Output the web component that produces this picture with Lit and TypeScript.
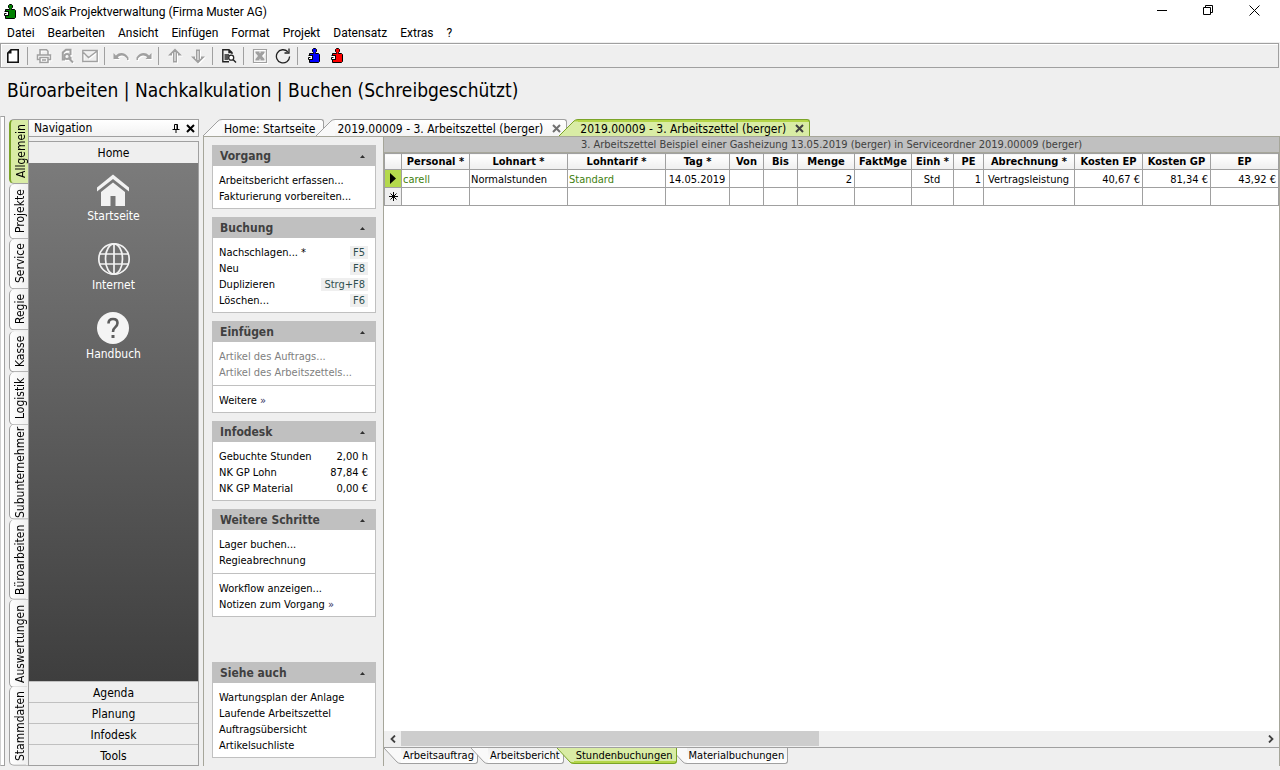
import { LitElement, html, svg, css, nothing } from "lit";
import { customElement, property, state } from "lit/decorators.js";
import { classMap } from "lit/directives/class-map.js";
import { styleMap } from "lit/directives/style-map.js";

interface Tool {
  icon?: string;
  label?: string;
  off?: boolean;
}

interface TaskRow {
  text: string;
  key?: string;
  value?: string;
  off?: boolean;
  more?: boolean;
}

interface TaskBox {
  title: string;
  sections: TaskRow[][];
}

interface Column {
  title: string;
  width: number;
  align: "left" | "center" | "right";
  value: string;
  link?: boolean;
}

const puzzle = (color: string) => svg`
  <path d="M3.5 14.5V11.500H6.500V7.500H3.500V5.500H7.500V4.500L6.500 3.500V1.500L7.500 .5H9.500L10.500 1.500V3.500L9.500 4.500V5.500H12.500L13.500 6.500V13.500L12.500 14.500Z"
    fill=${color} stroke="#000" />
  <path d="M3 8H6V11H3Z" fill="#fff" />
  <path d="M4.500 9.500H2.500V11.500H6.500V7.500H2.500" fill="none" stroke="#000" />`;

const GRAY = "#a0a0a0";

const ICONS: Record<string, unknown> = {
  new: svg`<path d="M6 1.800H13.200V14.200H2.800V5Z" fill="#fff" stroke="#111" stroke-width="1.600" /><path d="M6.500 1.500V5.500H2.500Z" fill="#111" />`,
  print: svg`<path d="M4 7V1.800H10.500L12 3.300V7 M4 11.500H1.500V7H14.500V11.500H12 M4 9.500H12V14.500H4Z M6 12H10" fill="none" stroke=${GRAY} stroke-width="1.500" />`,
  preview: svg`<path d="M11.500 7V1.800H7L3.800 4.500V11.500H6 M11.500 9V12.500 M10 10.500L14 14.500" fill="none" stroke=${GRAY} stroke-width="2" /><circle cx="8" cy="8.500" r="2.600" fill="none" stroke=${GRAY} stroke-width="2" />`,
  mail: svg`<path d="M.8 2.500H15.200V13.500H.8Z M1.500 4.500L6.500 9.500L8 8.500L14.500 3.500" fill="none" stroke=${GRAY} stroke-width="1.400" />`,
  undo: svg`<path d="M.5 5V11H6.500L4.800 9.300C7 6.800 11 6.300 14 10.500V12H15.500V9.500C12 4 6.500 3.800 2.900 7.400Z" fill=${GRAY} />`,
  redo: svg`<path d="M15.500 5V11H9.500L11.200 9.300C9 6.800 5 6.300 2 10.500V12H.5V9.500C4 4 9.500 3.800 13.100 7.400Z" fill=${GRAY} />`,
  up: svg`<path d="M8 .5L15 7.500H11V5.500L10 5V14.500H6V5L5 5.500V7.500H1Z" fill=${GRAY} /><path d="M8 4V13" stroke="#efefef" stroke-width="1.200" />`,
  down: svg`<path d="M8 15.500L15 8.500H11V10.500L10 11V1.500H6V11L5 10.500V8.500H1Z" fill=${GRAY} /><path d="M8 3V12" stroke="#efefef" stroke-width="1.200" />`,
  find: svg`<path d="M8 13.800H1.800V1.800H8L11 4.500V6 M8 1.800V4.500H11 M3.500 7H8 M3.500 9H7 M3.500 11H7 M12 11.500L15 14.500" fill="none" stroke="#222" stroke-width="1.400" /><circle cx="10.200" cy="9.700" r="2.500" fill="#fff" stroke="#222" stroke-width="1.300" />`,
  excel: svg`<path d="M1.500 1.500H14.500V14.500H1.500Z" fill="none" stroke=${GRAY} stroke-width="1.200" /><path d="M3.500 3.500H12.500V5L10 8L12.500 11V12.500H3.500V11L6 8L3.500 5Z" fill=${GRAY} /><path d="M7 3.500H9L8 5.500Z M7 12.500H9L8 10.500Z" fill="#efefef" />`,
  refresh: svg`<path d="M12.800 3.800A6.600 6.600 0 1 0 14.600 8.500" fill="none" stroke="#222" stroke-width="1.300" /><path d="M14 .5V5H9.500" fill="none" stroke="#222" stroke-width="1.300" />`,
  green: puzzle("#008000"),
  blue: puzzle("#0000ff"),
  red: puzzle("#ff0000"),
};

const icon = (name: string) =>
  html`<svg class="icon" viewBox="0 0 16 16" width="16" height="16" aria-hidden="true">${ICONS[name]}</svg>`;

const cross = (color: string) => html`
  <svg viewBox="0 0 9 9" width="9" height="9" aria-hidden="true">
    <path d="M1 1L8 8M8 1L1 8" stroke=${color} stroke-width="2" fill="none" />
  </svg>`;

const MENUS = ["Datei", "Bearbeiten", "Ansicht", "Einfügen", "Format", "Projekt", "Datensatz", "Extras", "?"];

const TOOLS: Tool[] = [
  { icon: "new", label: "Neu" },
  {},
  { icon: "print", label: "Drucken", off: true },
  { icon: "preview", label: "Seitenansicht", off: true },
  { icon: "mail", label: "E-Mail", off: true },
  {},
  { icon: "undo", label: "Rückgängig", off: true },
  { icon: "redo", label: "Wiederholen", off: true },
  {},
  { icon: "up", label: "Nach oben", off: true },
  { icon: "down", label: "Nach unten", off: true },
  {},
  { icon: "find", label: "Suchen" },
  {},
  { icon: "excel", label: "Excel", off: true },
  { icon: "refresh", label: "Aktualisieren" },
  {},
  { icon: "blue", label: "Modul blau" },
  { icon: "red", label: "Modul rot" },
];

const AREAS: [string, number][] = [
  ["Allgemein", 64],
  ["Projekte", 55],
  ["Service", 50],
  ["Regie", 41],
  ["Kasse", 41],
  ["Logistik", 53],
  ["Subunternehmer", 95],
  ["Büroarbeiten", 80],
  ["Auswertungen", 88],
  ["Stammdaten", 79],
];

const BOXES: TaskBox[] = [
  { title: "Vorgang", sections: [[{ text: "Arbeitsbericht erfassen..." }, { text: "Fakturierung vorbereiten..." }]] },
  {
    title: "Buchung",
    sections: [[
      { text: "Nachschlagen... *", key: "F5" },
      { text: "Neu", key: "F8" },
      { text: "Duplizieren", key: "Strg+F8" },
      { text: "Löschen...", key: "F6" },
    ]],
  },
  {
    title: "Einfügen",
    sections: [
      [{ text: "Artikel des Auftrags...", off: true }, { text: "Artikel des Arbeitszettels...", off: true }],
      [{ text: "Weitere", more: true }],
    ],
  },
  {
    title: "Infodesk",
    sections: [[
      { text: "Gebuchte Stunden", value: "2,00 h" },
      { text: "NK GP Lohn", value: "87,84 €" },
      { text: "NK GP Material", value: "0,00 €" },
    ]],
  },
  {
    title: "Weitere Schritte",
    sections: [
      [{ text: "Lager buchen..." }, { text: "Regieabrechnung" }],
      [{ text: "Workflow anzeigen..." }, { text: "Notizen zum Vorgang", more: true }],
    ],
  },
  {
    title: "Siehe auch",
    sections: [[
      { text: "Wartungsplan der Anlage" },
      { text: "Laufende Arbeitszettel" },
      { text: "Auftragsübersicht" },
      { text: "Artikelsuchliste" },
    ]],
  },
];

const COLUMNS: Column[] = [
  { title: "Personal *", width: 68, align: "left", value: "carell", link: true },
  { title: "Lohnart *", width: 98, align: "left", value: "Normalstunden" },
  { title: "Lohntarif *", width: 98, align: "left", value: "Standard", link: true },
  { title: "Tag *", width: 64, align: "center", value: "14.05.2019" },
  { title: "Von", width: 34, align: "left", value: "" },
  { title: "Bis", width: 34, align: "left", value: "" },
  { title: "Menge", width: 57, align: "right", value: "2" },
  { title: "FaktMge", width: 57, align: "right", value: "" },
  { title: "Einh *", width: 42, align: "center", value: "Std" },
  { title: "PE", width: 30, align: "right", value: "1" },
  { title: "Abrechnung *", width: 91, align: "center", value: "Vertragsleistung" },
  { title: "Kosten EP", width: 68, align: "right", value: "40,67 €" },
  { title: "Kosten GP", width: 68, align: "right", value: "81,34 €" },
  { title: "EP", width: 68, align: "right", value: "43,92 €" },
];

const base = css`
  * {
    box-sizing: border-box;
  }
  button {
    font: inherit;
    color: inherit;
    background: none;
    border: 0;
    margin: 0;
    padding: 0;
    text-align: left;
    white-space: nowrap;
  }
  svg {
    display: block;
    flex: none;
  }
`;

@customElement("task-box")
export class TaskBoxElement extends LitElement {
  @property({ attribute: false }) box!: TaskBox;

  static styles = [
    base,
    css`
      :host {
        display: block;
        border: 1px solid #c0c0c0;
        background: #fff;
      }
      .head {
        display: flex;
        align-items: center;
        justify-content: space-between;
        width: 100%;
        height: 20px;
        padding: 0 10px 0 7px;
        background: #c0c0c0;
        color: #404040;
        font-size: 12px;
        font-weight: bold;
      }
      .section {
        padding: 6px 7px 4px 6px;
      }
      .section + .section {
        border-top: 1px solid #c0c0c0;
        margin-top: 1px;
      }
      .row {
        display: flex;
        justify-content: space-between;
        align-items: center;
        width: 100%;
        height: 16px;
        padding-top: 1px;
        line-height: 15px;
      }
      .row:disabled {
        color: #808080;
      }
      .key {
        padding: 0 3px;
        font-family: inherit;
        line-height: 13px;
        background: #efefef;
        color: #2f4f4f;
      }
      .more {
        color: #303060;
      }
    `,
  ];

  render() {
    return html`
      <button class="head">
        ${this.box.title}
        <svg viewBox="0 0 5 3" width="5" height="3" aria-hidden="true"><path d="M0 3L2.500 0L5 3Z" fill="#303030" /></svg>
      </button>
      ${this.box.sections.map(
        (rows) => html`<div class="section">
          ${rows.map((row) =>
            row.value
              ? html`<div class="row"><span>${row.text}</span><span>${row.value}</span></div>`
              : html`<button class="row" ?disabled=${row.off}>
                  <span>${row.text}${row.more ? html` <span class="more">»</span>` : nothing}</span>
                  ${row.key ? html`<kbd class="key">${row.key}</kbd>` : nothing}
                </button>`
          )}
        </div>`
      )}
    `;
  }
}

@customElement("app-root")
export class AppRoot extends LitElement {
  @state() private area = "Allgemein";
  @state() private doc = 2;
  @state() private sheet = 2;

  static styles = [
    base,
    css`
      :host {
        display: flex;
        flex-direction: column;
        min-height: 100vh;
        box-sizing: border-box;
        background: #efefef;
        color: #000;
        font-family: "DejaVu Sans Condensed", "Noto Sans", sans-serif;
        font-size: 11px;
      }
      .title {
        display: flex;
        align-items: center;
        height: 24px;
        padding: 0 3px 0 2px;
        background: #fff;
        font-family: Roboto, "Open Sans", sans-serif;
        font-size: 12px;
      }
      .caption {
        flex: 1;
        padding-left: 5px;
      }
      .win {
        display: flex;
        justify-content: center;
        width: 46px;
        padding-bottom: 4px;
      }
      .menu {
        display: flex;
        gap: 13px;
        height: 18px;
        padding-left: 7px;
        background: #fff;
        font-family: Roboto, "Open Sans", sans-serif;
        font-size: 12px;
      }
      .tools {
        display: flex;
        align-items: center;
        height: 25px;
        margin: 1px 1px 0 0;
        border: 1px solid #a0a0a0;
        box-shadow: inset 1px 1px #fff;
      }
      .tool {
        display: flex;
        justify-content: center;
        width: 23px;
      }
      .tool:disabled {
        filter: drop-shadow(1px 1px 0 #fff);
      }
      .rule {
        width: 1px;
        height: 18px;
        margin: 0 4px 0 3px;
        background: #a0a0a0;
      }
      .heading {
        margin: 0;
        height: 48px;
        padding-left: 7px;
        line-height: 45px;
        font-size: 19px;
        font-weight: normal;
      }
      .main {
        flex: 1;
        display: flex;
        padding-bottom: 4px;
      }
      .grip {
        width: 5px;
        border: 1px solid #a0a0a0;
        border-left-color: #d0d0d0;
        background: #fff;
        margin-right: 4px;
      }
      .areas {
        display: flex;
        flex-direction: column;
        width: 20px;
        margin-top: 3px;
        margin-right: -1px;
      }
      .area {
        display: flex;
        align-items: center;
        justify-content: center;
        min-height: 0;
        padding-right: 2px;
        overflow: hidden;
        writing-mode: vertical-rl;
        transform: rotate(180deg);
        border: 1px solid #a0a0a0;
        border-bottom-width: 0;
        border-radius: 0 5px 5px 0;
        background: linear-gradient(270deg, #fff, #efefef);
        font-size: 12px;
        line-height: 18px;
      }
      .area:first-child {
        border-bottom-width: 1px;
      }
      .area.on {
        background: #d9eca5;
        border-right: 2px solid #7ba428;
      }
      .nav {
        display: flex;
        flex-direction: column;
        width: 171px;
        margin-top: 3px;
        font-size: 12px;
      }
      .navhead {
        display: flex;
        align-items: center;
        gap: 6px;
        height: 18px;
        padding: 0 3px 0 5px;
        border: 1px solid #a0a0a0;
        background: linear-gradient(#fff, #f2f2f2);
        margin-bottom: 4px;
      }
      .navname {
        flex: 1;
      }
      .navbody {
        flex: 1;
        display: flex;
        flex-direction: column;
        border: 1px solid #a0a0a0;
      }
      .group {
        height: 21px;
        padding-top: 1px;
        border-top: 1px solid #c0c0c0;
        text-align: center;
      }
      .group:first-child {
        padding-top: 0;
        border-top: 0;
      }
      .shelf {
        flex: 1;
        display: flex;
        flex-direction: column;
        align-items: center;
        gap: 19px;
        padding-top: 11px;
        background: linear-gradient(#7b7b7b, #3e3e3e);
        color: #fff;
      }
      .launch {
        display: flex;
        flex-direction: column;
        align-items: center;
        height: 50px;
        line-height: 16px;
      }
      .work {
        flex: 1;
        min-width: 0;
        display: flex;
        flex-direction: column;
        margin: 3px 0 0 4px;
      }
      .docs {
        display: flex;
        height: 17px;
        font-size: 12px;
      }
      .doc {
        display: flex;
      }
      .doc + .doc {
        margin-left: -8px;
      }
      .docface {
        display: flex;
        align-items: center;
        gap: 9px;
        padding: 1px 5px 0 2px;
        border-top: 1px solid #a0a0a0;
        border-right: 1px solid #a0a0a0;
        border-top-right-radius: 3px;
        background: linear-gradient(#fff, #f4f4f4);
      }
      .doc:first-child .docface {
        padding-right: 8px;
      }
      .doc.on .docface {
        background: linear-gradient(#b4d648 2px, #d9eca5 2px);
        border-color: #7ba428;
      }
      .pane {
        flex: 1;
        display: flex;
        border: 1px solid #a6a69a;
        border-bottom: 0;
      }
      .tasks {
        display: flex;
        flex-direction: column;
        gap: 8px;
        width: 179px;
        padding: 8px 7px 8px 8px;
      }
      .last {
        margin-top: auto;
      }
      .book {
        flex: 1;
        min-width: 0;
        display: flex;
        flex-direction: column;
        border-left: 1px solid #a6a69a;
      }
      .sheet {
        flex: 1;
        background: #fff;
        overflow: hidden;
      }
      .banner {
        height: 16px;
        border-bottom: 1px solid #a6a69a;
        background: #c0c0c0;
        color: #404040;
        line-height: 15px;
        text-align: center;
      }
      .grid {
        width: 100%;
        table-layout: fixed;
        border-collapse: collapse;
      }
      .grid th,
      .grid td {
        height: 18px;
        padding: 1px 2px 0 1px;
        border: 1px solid #a0a0a0;
        white-space: nowrap;
        overflow: hidden;
        line-height: 15px;
      }
      .grid .th {
        height: 16px;
        padding: 0;
        background: linear-gradient(#fff, #efefef);
        line-height: 14px;
        text-align: center;
      }
      .grid .mark {
        padding: 0;
        background: #efefef;
      }
      .grid .mark.on {
        background: #b4d94c;
      }
      .mark svg {
        margin: auto;
      }
      .left {
        text-align: left;
      }
      .center {
        text-align: center;
      }
      .right {
        text-align: right;
      }
      .link {
        color: #3f7f0f;
      }
      .scroll {
        display: flex;
        align-items: center;
        height: 16px;
        background: #efefef;
      }
      .arrow {
        width: 17px;
        display: flex;
        justify-content: center;
      }
      .track {
        flex: 1;
        height: 16px;
      }
      .thumb {
        width: 48.6%;
        height: 15px;
        background: #cdcdcd;
      }
      .sheets {
        display: flex;
        height: 19px;
        padding-bottom: 2px;
        border-top: 1px solid #a0a0a0;
      }
      .tab {
        display: flex;
      }
      .tab + .tab {
        margin-left: -7px;
      }
      .tab.on {
        position: relative;
        z-index: 1;
      }
      .tabface {
        padding: 1px 3px 0 2px;
        border-right: 1px solid #a0a0a0;
        border-bottom: 1px solid #a0a0a0;
        border-bottom-right-radius: 3px;
        background: linear-gradient(#efefef, #fff);
      }
      .tab.on .tabface {
        background: linear-gradient(0deg, #b4d648 2px, #d9eca5 2px);
        border-color: #7ba428;
      }
    `,
  ];

  private renderDoc(text: string, index: number, closable: boolean) {
    const on = this.doc === index;
    return html`
      <button class="doc ${classMap({ on })}" role="tab" aria-selected=${on} @click=${() => (this.doc = index)}>
        <svg viewBox="0 0 19 17" width="19" height="17" aria-hidden="true">
          <path d="M0 17L15 2Q16.500 .5 19 .5V17Z" fill=${on ? "#d9eca5" : "#f9f9f9"} />
          ${on ? svg`<path d="M15 2.500L17 1H19V2.500Z" fill="#b4d648" />` : nothing}
          <path d="M0 17L15 2Q16.500 .5 19 .5" fill="none" stroke=${on ? "#7ba428" : "#a0a0a0"} />
        </svg>
        <span class="docface">${text} ${closable ? cross(on ? "#404040" : "#707070") : nothing}</span>
      </button>`;
  }

  private renderSheet(text: string, index: number) {
    const on = this.sheet === index;
    return html`
      <button class="tab ${classMap({ on })}" role="tab" aria-selected=${on} @click=${() => (this.sheet = index)}>
        <svg viewBox="0 0 17 16" width="17" height="16" aria-hidden="true">
          <path d="M0 0L13 14Q14.500 15.500 17 15.500V0Z" fill=${on ? "#d9eca5" : "#f9f9f9"} />
          ${on ? svg`<path d="M12.500 14L14.500 15.500H17V14Z" fill="#b4d648" />` : nothing}
          <path d="M0 0L13 14Q14.500 15.500 17 15.500" fill="none" stroke=${on ? "#7ba428" : "#a0a0a0"} />
        </svg>
        <span class="tabface">${text}</span>
      </button>`;
  }

  render() {
    return html`
      <header class="title">
        ${icon("green")}
        <span class="caption">MOS'aik Projektverwaltung (Firma Muster AG)</span>
        <button class="win" aria-label="Minimieren">
          <svg viewBox="0 0 11 11" width="11" height="11"><path d="M0 5.500H10" stroke="#000" /></svg>
        </button>
        <button class="win" aria-label="Wiederherstellen">
          <svg viewBox="0 0 11 11" width="11" height="11">
            <path d="M.5 2.500H7.500V9.500H.5ZM2.500 2.500V.5H9.500V7.500H7.500" fill="none" stroke="#000" />
          </svg>
        </button>
        <button class="win" aria-label="Schließen">
          <svg viewBox="0 0 11 11" width="11" height="11"><path d="M.5 .5L10.500 10.500M10.500 .5L.5 10.500" stroke="#000" /></svg>
        </button>
      </header>

      <nav class="menu">${MENUS.map((m) => html`<button>${m}</button>`)}</nav>

      <div class="tools" role="toolbar">
        ${TOOLS.map((t) =>
          t.icon
            ? html`<button class="tool" aria-label=${t.label ?? ""} ?disabled=${t.off}>${icon(t.icon)}</button>`
            : html`<span class="rule"></span>`
        )}
      </div>

      <h1 class="heading">Büroarbeiten | Nachkalkulation | Buchen (Schreibgeschützt)</h1>

      <div class="main">
        <div class="grip"></div>
        <div class="areas" role="tablist">
          ${AREAS.map(
            ([name, share]) => html`<button
              class="area ${classMap({ on: this.area === name })}"
              role="tab"
              aria-selected=${this.area === name}
              style=${styleMap({ flex: `${share} 1 0px` })}
              @click=${() => (this.area = name)}
            >${name}</button>`
          )}
        </div>

        <aside class="nav">
          <div class="navhead">
            <span class="navname">Navigation</span>
            <button aria-label="Anheften">
              <svg viewBox="0 0 8 9" width="8" height="9">
                <path d="M2.500 5V.5H5.500V5M5 .5V5M.5 5.500H7.500M4 5.500V9" fill="none" stroke="#000" />
              </svg>
            </button>
            <button aria-label="Schließen">${cross("#000")}</button>
          </div>
          <div class="navbody">
            <button class="group">Home</button>
            <div class="shelf">
              <button class="launch">
                <svg viewBox="0 0 34 34" width="34" height="34" aria-hidden="true">
                  <path d="M1 17.500V13.500L17 .5L33 13.500V17.500L17 5Z" fill="#f2f2f2" />
                  <path d="M5 18L17 8.500L29 18V32H19.500V22H14.500V32H5Z" fill="#f2f2f2" />
                </svg>
                Startseite
              </button>
              <button class="launch">
                <svg viewBox="0 0 34 34" width="34" height="34" aria-hidden="true">
                  <g fill="none" stroke="#f2f2f2" stroke-width="1.700">
                    <circle cx="17" cy="16" r="15.200" />
                    <ellipse cx="17" cy="16" rx="8.500" ry="15.200" />
                    <path d="M17 1V31M3 11H31M3 21H31" />
                  </g>
                </svg>
                Internet
              </button>
              <button class="launch">
                <svg viewBox="0 0 34 34" width="34" height="34" aria-hidden="true">
                  <circle cx="17" cy="16" r="16" fill="#f4f4f4" />
                  <path d="M12.500 11.500Q12.500 7 17 7Q21.500 7 21.500 11Q21.500 13.500 19 15.500Q17 17 17 20" fill="none" stroke="#5c5c5c" stroke-width="2.600" />
                  <path d="M15.500 23H18.500V26H15.500Z" fill="#5c5c5c" />
                </svg>
                Handbuch
              </button>
            </div>
            ${["Agenda", "Planung", "Infodesk", "Tools"].map((g) => html`<button class="group">${g}</button>`)}
          </div>
        </aside>

        <main class="work">
          <div class="docs" role="tablist">
            ${this.renderDoc("Home: Startseite", 0, false)}
            ${this.renderDoc("2019.00009 - 3. Arbeitszettel (berger)", 1, true)}
            ${this.renderDoc("2019.00009 - 3. Arbeitszettel (berger)", 2, true)}
          </div>
          <div class="pane">
            <div class="tasks">
              ${BOXES.map(
                (box, i) => html`<task-box class=${classMap({ last: i === BOXES.length - 1 })} .box=${box}></task-box>`
              )}
            </div>
            <div class="book">
              <div class="sheet">
                <div class="banner">
                  3. Arbeitszettel Beispiel einer Gasheizung 13.05.2019 (berger) in Serviceordner 2019.00009 (berger)
                </div>
                <table class="grid">
                  <colgroup>
                    <col style=${styleMap({ width: "17px" })} />
                    ${COLUMNS.map((c) => html`<col style=${styleMap({ width: `${c.width}px` })} />`)}
                  </colgroup>
                  <thead>
                    <tr>
                      <th class="th"></th>
                      ${COLUMNS.map((c) => html`<th class="th" scope="col">${c.title}</th>`)}
                    </tr>
                  </thead>
                  <tbody>
                    <tr>
                      <td class="mark on">
                        <svg viewBox="0 0 6 11" width="6" height="11" aria-hidden="true"><path d="M0 0L6 5.500L0 11Z" /></svg>
                      </td>
                      ${COLUMNS.map((c) => html`<td class=${classMap({ [c.align]: true, link: !!c.link })}>${c.value}</td>`)}
                    </tr>
                    <tr>
                      <td class="mark">
                        <svg viewBox="0 0 9 9" width="9" height="9" aria-hidden="true">
                          <path d="M4.500 0V9M0 4.500H9M1.500 1.500L7.500 7.500M7.500 1.500L1.500 7.500" stroke="#000" fill="none" />
                        </svg>
                      </td>
                      ${COLUMNS.map(() => html`<td></td>`)}
                    </tr>
                  </tbody>
                </table>
              </div>
              <div class="scroll">
                <button class="arrow" aria-label="Nach links">
                  <svg viewBox="0 0 6 8" width="6" height="8"><path d="M5 .5L1.500 4L5 7.500" fill="none" stroke="#404040" stroke-width="1.800" /></svg>
                </button>
                <div class="track"><div class="thumb"></div></div>
                <button class="arrow" aria-label="Nach rechts">
                  <svg viewBox="0 0 6 8" width="6" height="8"><path d="M1 .5L4.500 4L1 7.500" fill="none" stroke="#404040" stroke-width="1.800" /></svg>
                </button>
              </div>
              <div class="sheets" role="tablist">
                ${["Arbeitsauftrag", "Arbeitsbericht", "Stundenbuchungen", "Materialbuchungen"].map((s, i) => this.renderSheet(s, i))}
              </div>
            </div>
          </div>
        </main>
      </div>
    `;
  }
}
